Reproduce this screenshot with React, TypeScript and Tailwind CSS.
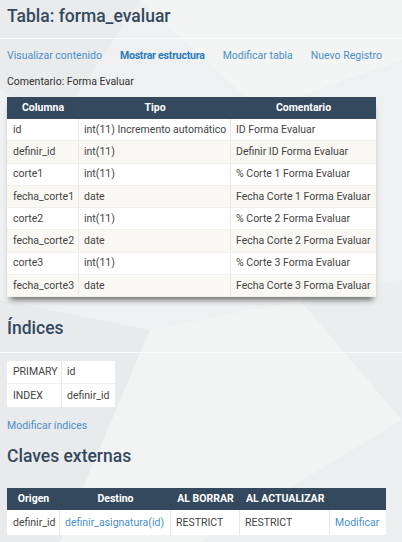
const columnas = [
  { nombre: 'id', tipo: 'int(11) Incremento automático', comentario: 'ID Forma Evaluar' },
  { nombre: 'definir_id', tipo: 'int(11)', comentario: 'Definir ID Forma Evaluar' },
  { nombre: 'corte1', tipo: 'int(11)', comentario: '% Corte 1 Forma Evaluar' },
  { nombre: 'fecha_corte1', tipo: 'date', comentario: 'Fecha Corte 1 Forma Evaluar' },
  { nombre: 'corte2', tipo: 'int(11)', comentario: '% Corte 2 Forma Evaluar' },
  { nombre: 'fecha_corte2', tipo: 'date', comentario: 'Fecha Corte 2 Forma Evaluar' },
  { nombre: 'corte3', tipo: 'int(11)', comentario: '% Corte 3 Forma Evaluar' },
  { nombre: 'fecha_corte3', tipo: 'date', comentario: 'Fecha Corte 3 Forma Evaluar' },
];

function Fondo() {
  return (
    <svg
      className="pointer-events-none absolute inset-0 h-full w-full"
      viewBox="0 0 402 542"
      preserveAspectRatio="none"
    >
      <rect width="402" height="542" fill="#eff0f1" />
      <polygon points="0,0 140,0 60,120 0,90" fill="#e9ebec" />
      <polygon points="140,0 402,0 402,60 260,110" fill="#f3f4f4" />
      <polygon points="0,300 150,330 60,542 0,542" fill="#e8eaeb" />
      <polygon points="150,330 300,300 402,420 200,542 60,542" fill="#f2f3f3" />
      <polygon points="300,300 402,280 402,420" fill="#ebedee" />
      <polygon points="200,542 402,420 402,542" fill="#eceeef" />
    </svg>
  );
}

function App() {
  return (
    <div className="relative h-[542px] w-[402px] overflow-hidden font-['Roboto',sans-serif] text-[10.5px] whitespace-nowrap text-[#444]">
      <Fondo />
      <div className="relative px-[7px]">
        {/* Titulo */}
        <h1 className="pt-[4px] text-[17.5px] leading-[24px] font-medium text-[#34495e]">
          Tabla: forma_evaluar
        </h1>
        <div className="-mx-[7px] mt-[10px] h-px bg-[#fbfbfb]" />

        {/* Enlaces */}
        <div className="mt-[10px] flex gap-[18px] leading-[14px] text-[#4a8fc9]">
          <span>Visualizar contenido</span>
          <span className="font-bold tracking-[-0.2px] text-[#2a7bbd]">Mostrar estructura</span>
          <span>Modificar tabla</span>
          <span>Nuevo Registro</span>
        </div>
        <div className="mt-[12px] leading-[14px] text-[#333]">Comentario: Forma Evaluar</div>

        {/* Tabla de columnas */}
        <div className="mt-[8px] w-[369px] shadow-[0_6px_6px_-3px_rgba(0,0,0,0.55)]">
          <div className="flex h-[22px] items-center bg-[#34495e] font-bold text-white">
            <div className="w-[72px] text-center">Columna</div>
            <div className="w-[152px] text-center">Tipo</div>
            <div className="flex-1 text-center">Comentario</div>
          </div>
          {columnas.map((c, i) => (
            <div
              key={c.nombre}
              className={`flex h-[22.25px] items-center border-b border-[#f1efe9] ${
                i % 2 === 0 ? 'bg-white' : 'bg-[#f9f8f3]'
              }`}
            >
              <div className="flex h-full w-[72px] items-center border-r border-[#ebe9e4] px-[6px]">
                {c.nombre}
              </div>
              <div className="flex h-full w-[152px] items-center border-r border-[#ebe9e4] px-[5px]">
                {c.tipo}
              </div>
              <div className="flex h-full flex-1 items-center px-[5px]">{c.comentario}</div>
            </div>
          ))}
        </div>

        {/* Indices */}
        <h2 className="mt-[19px] text-[17.5px] leading-[24px] font-medium text-[#34495e]">
          Índices
        </h2>
        <div className="-mx-[7px] mt-[12px] h-px bg-[#fbfbfb]" />
        <div className="mt-[8px] w-[108px] bg-white">
          <div className="flex h-[23px] items-center border-b border-[#f1efe9]">
            <div className="flex h-full w-[55px] items-center border-r border-[#ebe9e4] px-[6px]">
              PRIMARY
            </div>
            <div className="px-[5px]">id</div>
          </div>
          <div className="flex h-[23px] items-center">
            <div className="flex h-full w-[55px] items-center border-r border-[#ebe9e4] px-[6px]">
              INDEX
            </div>
            <div className="px-[5px]">definir_id</div>
          </div>
        </div>
        <div className="mt-[12px] leading-[14px] text-[#4a8fc9]">Modificar índices</div>

        {/* Claves externas */}
        <h2 className="mt-[11px] text-[17.5px] leading-[24px] font-medium text-[#34495e]">
          Claves externas
        </h2>
        <div className="mt-[20px] w-[379px]">
          <div className="flex h-[22px] items-center bg-[#34495e] font-bold text-white">
            <div className="w-[53px] text-center">Origen</div>
            <div className="w-[111px] text-center">Destino</div>
            <div className="w-[69px] text-center">AL BORRAR</div>
            <div className="w-[90px] px-[6px]">AL ACTUALIZAR</div>
            <div className="flex-1" />
          </div>
          <div className="flex h-[25px] items-center bg-white">
            <div className="flex h-full w-[53px] items-center border-r border-[#ebe9e4] px-[6px]">
              definir_id
            </div>
            <div className="flex h-full w-[111px] items-center border-r border-[#ebe9e4] px-[5px] text-[#4a8fc9]">
              definir_asignatura(id)
            </div>
            <div className="flex h-full w-[69px] items-center border-r border-[#ebe9e4] px-[5px]">
              RESTRICT
            </div>
            <div className="flex h-full w-[90px] items-center border-r border-[#ebe9e4] px-[5px]">
              RESTRICT
            </div>
            <div className="flex-1 px-[5px] text-[#4a8fc9]">Modificar</div>
          </div>
        </div>
      </div>
    </div>
  );
}

export default App;
